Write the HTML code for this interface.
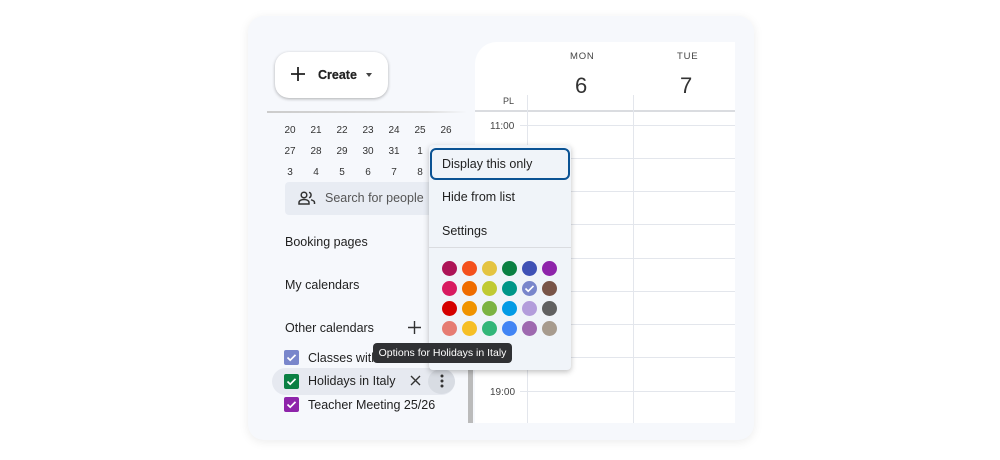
<!DOCTYPE html>
<html><head><meta charset="utf-8"><style>
*{margin:0;padding:0;box-sizing:border-box}
body{width:1000px;height:460px;background:#fff;font-family:"Liberation Sans",Arial,sans-serif;position:relative;overflow:hidden;color:#1f1f1f}
.a{position:absolute}
.card{left:248px;top:16px;width:506px;height:424px;background:#f6f8fc;border-radius:16px;box-shadow:0 2px 10px rgba(0,0,0,.08)}
.cal{left:475px;top:42px;width:260px;height:381px;background:#fff;border-top-left-radius:22px}
.hl{left:528px;width:207px;height:1px;background:#e3e6ec}
.vl{top:95px;width:1px;height:328px;background:#e3e6ec}
.d{font-size:10px;color:#333;width:26px;text-align:center}
.t{font-size:10px;color:#444}
.lbl{font-size:12.5px;color:#1f1f1f}
.dot{width:15px;height:15px;border-radius:50%}
.cb{width:15px;height:15px;border-radius:2px}
</style></head><body>
<div class="a card"></div>
<div class="a cal"></div>
<div class="a" style="left:267px;top:111px;width:200px;height:2px;background:linear-gradient(90deg,#ccc,#ddd 80%,#f6f8fc)"></div>
<div class="a" style="left:475px;top:110px;width:260px;height:2px;background:#dadce0"></div>
<div class="a" style="left:570px;top:51px;font-size:9.5px;letter-spacing:.8px;color:#444">MON</div>
<div class="a" style="left:677px;top:51px;font-size:9.5px;letter-spacing:.8px;color:#444">TUE</div>
<div class="a" style="left:575px;top:73px;font-size:22px;color:#333">6</div>
<div class="a" style="left:680px;top:73px;font-size:22px;color:#333">7</div>
<div class="a" style="left:503px;top:96px;font-size:9px;color:#444">PL</div>
<div class="a vl" style="left:527px"></div>
<div class="a vl" style="left:633px"></div>
<div class="a hl" style="top:125px;left:520px;width:215px"></div>
<div class="a hl" style="top:158px"></div>
<div class="a hl" style="top:191px"></div>
<div class="a hl" style="top:224px"></div>
<div class="a hl" style="top:258px"></div>
<div class="a hl" style="top:291px"></div>
<div class="a hl" style="top:324px"></div>
<div class="a hl" style="top:357px"></div>
<div class="a hl" style="top:391px;left:520px;width:215px"></div>
<div class="a t" style="left:490px;top:121px">11:00</div>
<div class="a t" style="left:490px;top:387px">19:00</div>
<div class="a" style="left:468px;top:365px;width:5px;height:58px;background:#bbb"></div>
<!-- create -->
<div class="a" style="left:275px;top:52px;width:113px;height:46px;background:#fff;border-radius:14px;box-shadow:0 1px 3px rgba(0,0,0,.3)"></div>
<svg class="a" style="left:290px;top:66px" width="16" height="16"><path d="M8 1v14M1 8h14" stroke="#222" stroke-width="1.8"/></svg>
<div class="a" style="left:318px;top:68px;font-size:12.5px;font-weight:600;color:#222;-webkit-text-stroke:.2px #222">Create</div>
<div class="a" style="left:366px;top:73px;border:3.5px solid transparent;border-top:4px solid #444"></div>
<!-- mini cal -->
<div class="a" style="left:277px;top:125px">
<div style="display:flex"><span class="d">20</span><span class="d">21</span><span class="d">22</span><span class="d">23</span><span class="d">24</span><span class="d">25</span><span class="d">26</span></div>
<div style="display:flex;margin-top:10px"><span class="d">27</span><span class="d">28</span><span class="d">29</span><span class="d">30</span><span class="d">31</span><span class="d">1</span></div>
<div style="display:flex;margin-top:10px"><span class="d">3</span><span class="d">4</span><span class="d">5</span><span class="d">6</span><span class="d">7</span><span class="d">8</span></div>
</div>
<div class="a" style="left:285px;top:182px;width:150px;height:33px;background:#e8ecf3;border-radius:4px"></div>
<svg class="a" style="left:298px;top:191px" width="18" height="14" fill="none" stroke="#333" stroke-width="1.5"><circle cx="6" cy="4" r="2.8"/><path d="M1 13v-1.5c0-2 2.5-3 5-3s5 1 5 3V13zM11 1.3a2.8 2.8 0 010 5.4M13 8.8c2 .5 3.5 1.3 3.5 2.7V13"/></svg>
<div class="a" style="left:325px;top:191px;font-size:12.5px;color:#555">Search for people</div>
<div class="a lbl" style="left:285px;top:235px">Booking pages</div>
<div class="a lbl" style="left:285px;top:278px">My calendars</div>
<div class="a lbl" style="left:285px;top:321px">Other calendars</div>
<svg class="a" style="left:408px;top:321px" width="13" height="13"><path d="M6.5 0v13M0 6.5h13" stroke="#333" stroke-width="1.4"/></svg>
<div class="a" style="left:272px;top:368px;width:183px;height:27px;background:#e6e9f0;border-radius:14px"></div>
<div class="a" style="left:428px;top:369px;width:27px;height:25px;background:#d8dce3;border-radius:50%"></div>
<div class="a cb" style="left:284px;top:350px;background:#7986cb"></div>
<div class="a cb" style="left:284px;top:374px;background:#0b8043"></div>
<div class="a cb" style="left:284px;top:397px;background:#8e24aa"></div>
<svg class="a" style="left:284px;top:350px" width="15" height="63" fill="none" stroke="#fff" stroke-width="1.7"><path d="M3.5 7.5l2.7 2.7 5.3-5.3M3.5 31.5l2.7 2.7 5.3-5.3M3.5 54.5l2.7 2.7 5.3-5.3"/></svg>
<div class="a lbl" style="left:308px;top:351px">Classes with</div>
<div class="a lbl" style="left:308px;top:374px">Holidays in Italy</div>
<div class="a lbl" style="left:308px;top:398px">Teacher Meeting 25/26</div>
<svg class="a" style="left:410px;top:375px" width="11" height="11"><path d="M1 1l9 9M10 1l-9 9" stroke="#333" stroke-width="1.4"/></svg>
<svg class="a" style="left:439px;top:374px" width="6" height="14" fill="#333"><circle cx="3" cy="2" r="1.5"/><circle cx="3" cy="7" r="1.5"/><circle cx="3" cy="12" r="1.5"/></svg>
<!-- menu -->
<div class="a" style="left:429px;top:145px;width:142px;height:225px;background:#f0f4f9;border-radius:4px;box-shadow:0 2px 6px rgba(0,0,0,.25)"></div>
<div class="a" style="left:430px;top:148px;width:140px;height:32px;border:2.5px solid #0b5394;border-radius:6px"></div>
<div class="a lbl" style="left:442px;top:157px">Display this only</div>
<div class="a lbl" style="left:442px;top:190px">Hide from list</div>
<div class="a lbl" style="left:442px;top:224px">Settings</div>
<div class="a" style="left:429px;top:247px;width:142px;height:1px;background:#dadce0"></div>
<div class="a" style="left:442px;top:261px;display:grid;grid-template-columns:repeat(6,15px);gap:5px">
<div class="dot" style="background:#ad1457"></div><div class="dot" style="background:#f4511e"></div><div class="dot" style="background:#e4c441"></div><div class="dot" style="background:#0b8043"></div><div class="dot" style="background:#3f51b5"></div><div class="dot" style="background:#8e24aa"></div>
<div class="dot" style="background:#d81b60"></div><div class="dot" style="background:#ef6c00"></div><div class="dot" style="background:#c0ca33"></div><div class="dot" style="background:#009688"></div><div class="dot" style="background:#7986cb"></div><div class="dot" style="background:#795548"></div>
<div class="dot" style="background:#d50000"></div><div class="dot" style="background:#f09300"></div><div class="dot" style="background:#7cb342"></div><div class="dot" style="background:#039be5"></div><div class="dot" style="background:#b39ddb"></div><div class="dot" style="background:#616161"></div>
<div class="dot" style="background:#e67c73"></div><div class="dot" style="background:#f6bf26"></div><div class="dot" style="background:#33b679"></div><div class="dot" style="background:#4285f4"></div><div class="dot" style="background:#9e69af"></div><div class="dot" style="background:#a79b8e"></div>
</div>
<svg class="a" style="left:522px;top:281px" width="15" height="15" fill="none" stroke="#fff" stroke-width="1.6"><path d="M3.5 7.5l2.7 2.7 5.3-5.3"/></svg>
<!-- tooltip -->
<div class="a" style="left:373px;top:343px;width:139px;height:20px;background:#303134;border-radius:4px;color:#fff;font-size:10.5px;line-height:20px;text-align:center">Options for Holidays in Italy</div>
</body></html>
